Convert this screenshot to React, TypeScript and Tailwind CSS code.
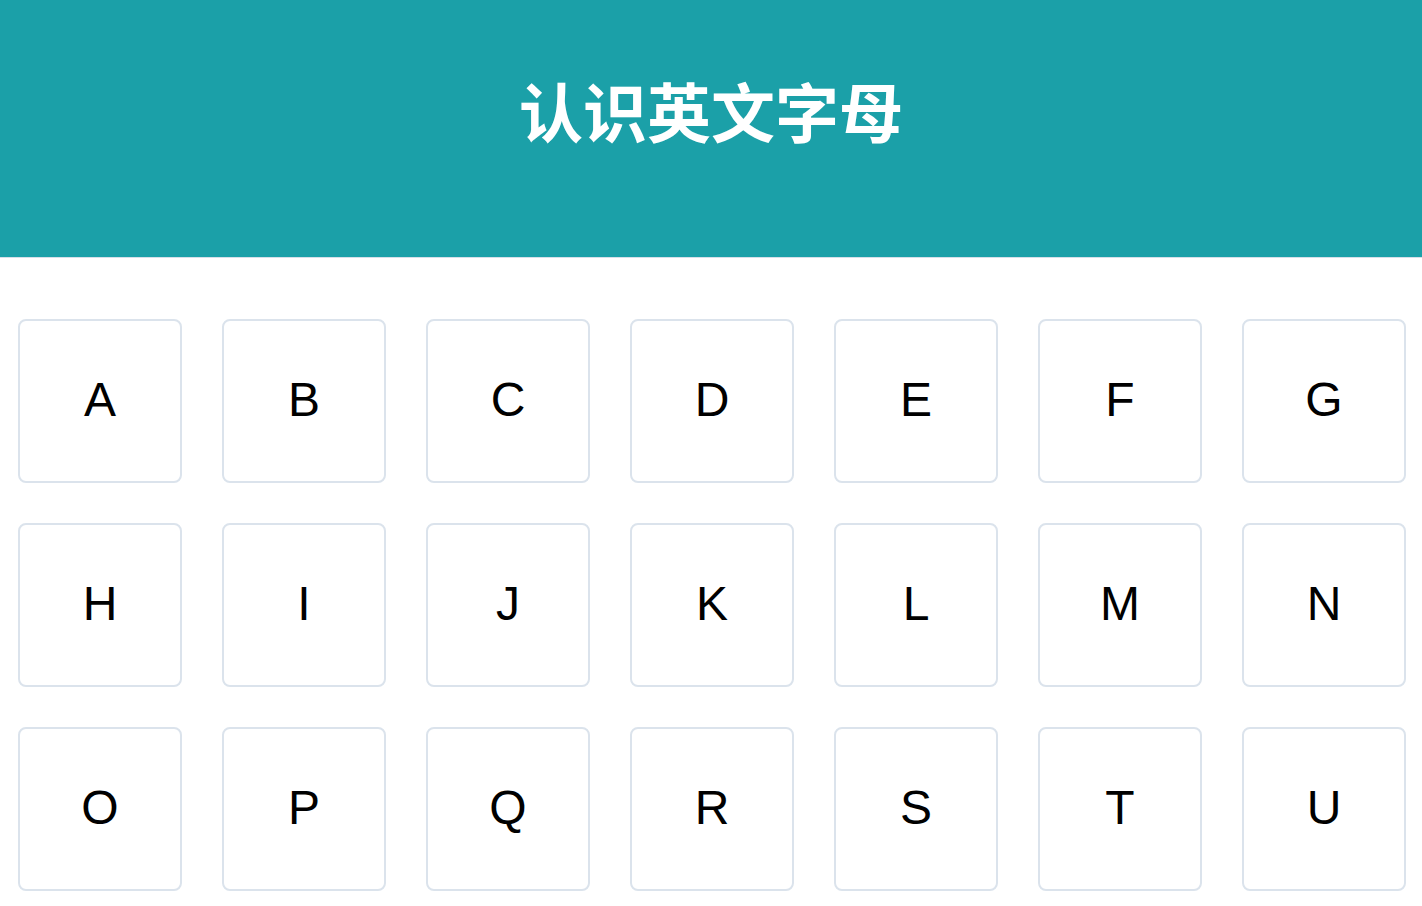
const letters = "ABCDEFGHIJKLMNOPQRSTU".split("");

export default function App() {
    return (
        <div className="min-h-screen bg-white">
            <header className="h-[258px] bg-[#1ba0a8] border-b border-[#d6dfe8] flex justify-center pt-[68px]">
                <h1 className="text-[64px] leading-[82px] font-bold text-white [font-family:'Noto_Sans_CJK_SC',sans-serif]">认识英文字母</h1>
            </header>

            <div className="grid grid-cols-[repeat(7,164px)] gap-[40px] pl-[18px] pt-[61px]">
                {letters.map((l) => (
                    <div key={l} className="h-[164px] rounded-lg border-2 border-[#dbe3ec] bg-white flex items-center justify-center pb-[3px]">
                        <span className="text-[48px] text-black [font-family:'Liberation_Sans',Arial,sans-serif]">{l}</span>
                    </div>
                ))}
            </div>
        </div>
    );
}
